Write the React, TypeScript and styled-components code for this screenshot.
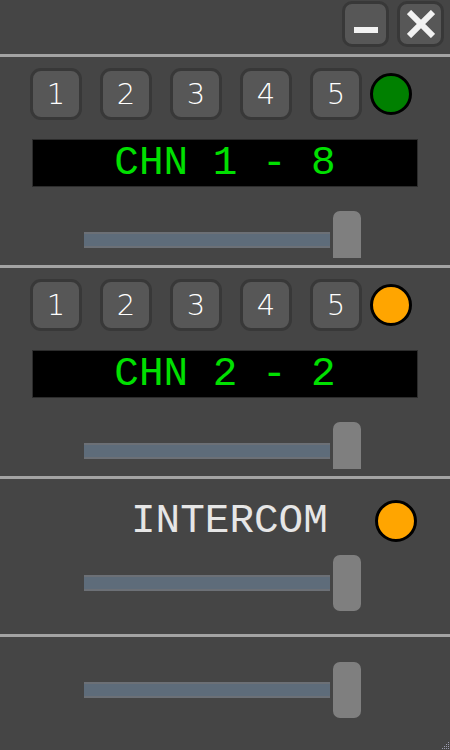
import React from "react";
import styled, { createGlobalStyle } from "styled-components";

const GlobalStyle = createGlobalStyle`
  html, body {
    margin: 0;
    padding: 0;
    background: #454545;
    overflow: hidden;
  }
  * { box-sizing: border-box; }
`;

const MONO = `"Courier New", "Nimbus Mono PS", "Nimbus Mono L", "FreeMono", "Liberation Mono", monospace`;

const Window = styled.div`
  position: relative;
  width: 450px;
  height: 750px;
  background: #454545;
  display: flex;
  flex-direction: column;
  overflow: hidden;
  font-family: "DejaVu Sans", sans-serif;
`;

const TitleBar = styled.div`
  height: 54px;
  display: flex;
  justify-content: flex-end;
  align-items: flex-start;
  gap: 8px;
  padding: 1px 6px 0 0;
`;

const WinButton = styled.button`
  width: 47px;
  height: 46px;
  padding: 0;
  border: 3px solid #383838;
  border-radius: 10px;
  background: #575757;
  display: flex;
  align-items: center;
  justify-content: center;
  cursor: pointer;
`;

const Divider = styled.div`
  height: 3px;
  flex: none;
  background: #a3a3a3;
`;

const Section = styled.div<{ $pt: number; $pb: number }>`
  display: flex;
  flex-direction: column;
  padding-top: ${(p) => p.$pt}px;
  padding-bottom: ${(p) => p.$pb}px;
  flex: none;
`;

const PresetRow = styled.div`
  display: flex;
  align-items: center;
  gap: 18px;
  padding-left: 30px;
`;

const PresetButton = styled.button`
  width: 52px;
  height: 52px;
  padding: 0;
  border: 3px solid #383838;
  border-radius: 11px;
  background: #575757;
  color: #ffffff;
  font-family: "DejaVu Sans", sans-serif;
  font-weight: 200;
  font-size: 29px;
  line-height: 1;
  display: flex;
  align-items: center;
  justify-content: center;
`;

const Lamp = styled.div<{ $color: string; $ml: number }>`
  width: 42px;
  height: 42px;
  border-radius: 50%;
  border: 3px solid #000;
  background: ${(p) => p.$color};
  margin-left: ${(p) => p.$ml}px;
  flex: none;
`;

const Display = styled.div`
  margin: 19px 32px 0 32px;
  height: 48px;
  background: #000;
  border: 1px solid #2c2c2c;
  color: #00e000;
  font-family: ${MONO};
  font-size: 41px;
  line-height: 46px;
  text-align: center;
  white-space: pre;
`;

const IntercomRow = styled.div`
  display: flex;
  align-items: center;
  padding-left: 131px;
  height: 42px;
`;

const Label = styled.div`
  color: #e6e6e6;
  font-family: ${MONO};
  font-size: 41px;
  line-height: 42px;
  white-space: pre;
`;

const Fader = styled.div<{ $h: number; $mt: number }>`
  display: flex;
  align-items: flex-start;
  gap: 3px;
  margin-left: 84px;
  margin-top: ${(p) => p.$mt}px;
  height: ${(p) => p.$h}px;
  overflow: hidden;
`;

const Track = styled.div<{ $mt: number }>`
  width: 246px;
  height: 16px;
  margin-top: ${(p) => p.$mt}px;
  background: #5e6c7a;
  border-top: 2px solid #6c7076;
  border-bottom: 2px solid #6c7076;
`;

const Thumb = styled.div`
  width: 28px;
  height: 56px;
  flex: none;
  background: #7f7f7f;
  border-radius: 7px;
`;

const Grip = styled.svg`
  position: absolute;
  right: 0;
  bottom: 0;
`;

const Presets: React.FC<{ lamp: string }> = ({ lamp }) => (
  <PresetRow>
    {[1, 2, 3, 4, 5].map((n) => (
      <PresetButton key={n}>{n}</PresetButton>
    ))}
    <Lamp $color={lamp} $ml={-10} />
  </PresetRow>
);

export default function App() {
  return (
    <>
      <GlobalStyle />
      <Window>
        <TitleBar>
          <WinButton aria-label="minimize">
            <svg width="24" height="24" viewBox="0 0 24 24">
              <rect x="0" y="15" width="24" height="6" fill="#f2f2f2" />
            </svg>
          </WinButton>
          <WinButton aria-label="close">
            <svg width="28" height="28" viewBox="0 0 28 28">
              <path d="M2 2 L26 26 M26 2 L2 26" stroke="#f2f2f2" strokeWidth="6" fill="none" />
            </svg>
          </WinButton>
        </TitleBar>
        <Divider />
        <Section $pt={11} $pb={7}>
          <Presets lamp="#008000" />
          <Display>CHN 1 - 8</Display>
          <Fader $h={47} $mt={24}>
            <Track $mt={21} />
            <Thumb />
          </Fader>
        </Section>
        <Divider />
        <Section $pt={11} $pb={7}>
          <Presets lamp="#ffa500" />
          <Display>CHN 2 - 2</Display>
          <Fader $h={47} $mt={24}>
            <Track $mt={21} />
            <Thumb />
          </Fader>
        </Section>
        <Divider />
        <Section $pt={21} $pb={23}>
          <IntercomRow>
            <Label>INTERCOM</Label>
            <Lamp $color="#ffa500" $ml={47} />
          </IntercomRow>
          <Fader $h={56} $mt={13}>
            <Track $mt={20} />
            <Thumb />
          </Fader>
        </Section>
        <Divider />
        <Section $pt={25} $pb={0}>
          <Fader $h={56} $mt={0}>
            <Track $mt={20} />
            <Thumb />
          </Fader>
        </Section>
        <Grip width="10" height="10" viewBox="0 0 10 10">
          <rect x="8" y="2" width="1" height="1" fill="#9a9aae" />
          <rect x="6" y="4" width="1" height="1" fill="#9a9aae" />
          <rect x="8" y="4" width="1" height="1" fill="#9a9aae" />
          <rect x="4" y="6" width="1" height="1" fill="#9a9aae" />
          <rect x="6" y="6" width="1" height="1" fill="#9a9aae" />
          <rect x="8" y="6" width="1" height="1" fill="#9a9aae" />
          <rect x="2" y="8" width="1" height="1" fill="#9a9aae" />
          <rect x="4" y="8" width="1" height="1" fill="#9a9aae" />
          <rect x="6" y="8" width="1" height="1" fill="#9a9aae" />
          <rect x="8" y="8" width="1" height="1" fill="#9a9aae" />
        </Grip>
      </Window>
    </>
  );
}
